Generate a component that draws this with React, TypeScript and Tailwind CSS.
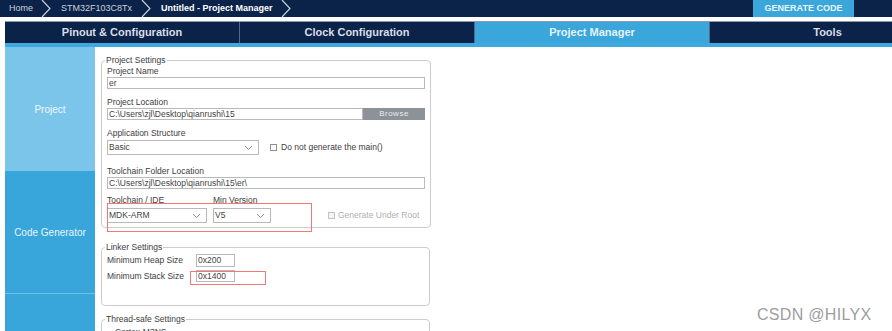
import React from "react";

const Chevron = () => (
  <svg width="10" height="17" viewBox="0 0 10 17" className="shrink-0">
    <polyline points="1,0 9,8.5 1,17" fill="none" stroke="#c7d0dc" strokeWidth="1.2" />
  </svg>
);

const DownArrow = () => (
  <svg width="9" height="6" viewBox="0 0 9 6">
    <polyline points="1,1 4.5,4.5 8,1" fill="none" stroke="#8a8a8a" strokeWidth="1" />
  </svg>
);

const RedBox = ({ w, h, className = "" }: { w: number; h: number; className?: string }) => (
  <svg width={w} height={h} viewBox={`0 0 ${w} ${h}`} className={`pointer-events-none absolute z-10 ${className}`}>
    <rect x="0.5" y="0.5" width={w - 1} height={h - 1} fill="none" stroke="#ef7878" strokeWidth="1" />
  </svg>
);

const Input = ({ value, className = "" }: { value: string; className?: string }) => (
  <div
    className={`border border-[#b9b9b9] bg-white text-[8.5px] leading-none text-[#444] flex items-center pl-[1px] ${className}`}
  >
    {value}
  </div>
);

const Select = ({ value, className = "" }: { value: string; className?: string }) => (
  <div
    className={`border border-[#b9b9b9] bg-white text-[8.5px] leading-none text-[#444] flex items-center justify-between pl-[1px] pr-[5px] ${className}`}
  >
    <span>{value}</span>
    <DownArrow />
  </div>
);

const Label = ({ children, className = "" }: { children: React.ReactNode; className?: string }) => (
  <div className={`h-[10px] leading-[10px] text-[8.5px] text-[#3d3d3d] ${className}`}>{children}</div>
);

const Box = () => <span className="inline-block w-[7px] h-[7px] border border-[#8f8f8f] bg-white" />;

export default function App() {
  return (
    <div
      className="relative w-[892px] h-[331px] overflow-hidden bg-white"
      style={{ fontFamily: "'Liberation Sans', Arial, sans-serif" }}
    >
      {/* Top breadcrumb bar */}
      <div className="h-[17px] bg-[#0b2249] flex items-center">
        <span className="ml-[9px] text-[9px] text-[#c9d1dc]">Home</span>
        <span className="ml-[8px]">
          <Chevron />
        </span>
        <span className="ml-[10px] text-[9px] text-[#c9d1dc]">STM32F103C8Tx</span>
        <span className="ml-[9px]">
          <Chevron />
        </span>
        <span className="ml-[10px] text-[9px] font-bold text-white">Untitled - Project Manager</span>
        <span className="ml-[8px]">
          <Chevron />
        </span>
        <div className="ml-auto mr-[38px] w-[101px] h-full bg-[#3aa6da] flex items-center justify-center text-[9px] font-bold text-[#eaf6fc]">
          GENERATE CODE
        </div>
      </div>

      {/* Tab bar */}
      <div className="mt-[4px] ml-[5px] h-[22px] border-t border-[#8d9bb0] bg-[#0b2249] flex overflow-hidden">
        <div className="w-[235px] shrink-0 flex items-center justify-center text-[11px] font-bold text-[#d9dee6] border-r border-[#54688a]">
          Pinout &amp; Configuration
        </div>
        <div className="w-[235px] shrink-0 flex items-center justify-center text-[11px] font-bold text-[#d9dee6] border-r border-[#54688a]">
          Clock Configuration
        </div>
        <div className="w-[235px] shrink-0 flex items-center justify-center text-[11px] font-bold text-[#e6f2fa] bg-[#3aa6da] border-r border-[#54688a]">
          Project Manager
        </div>
        <div className="w-[235px] shrink-0 flex items-center justify-center text-[11px] font-bold text-[#d9dee6]">
          Tools
        </div>
      </div>
      <div className="ml-[5px] h-[4px] bg-[#3ea9de]" />

      {/* Main */}
      <div className="ml-[5px] flex">
        {/* Sidebar */}
        <div className="w-[90px] shrink-0 flex flex-col">
          <div className="h-[124px] bg-[#7cc5ea] flex items-center justify-center text-[10px] text-[#eef8fd]">
            Project
          </div>
          <div className="h-[122px] bg-[#39a6db] flex items-center justify-center text-[10px] text-[#e6f4fb]">
            Code Generator
          </div>
          <div className="h-[60px] bg-[#39a6db] border-t border-[#72c0e8]" />
        </div>

        {/* Content */}
        <div className="pl-[6px] pt-[8px] flex flex-col">
          {/* Project Settings */}
          <fieldset className="w-[329px] border border-[#cdcdcd] rounded-[4px] px-[5px] pb-[4px]">
            <legend className="text-[8.5px] leading-[10px] text-[#3d3d3d] px-[1px] -ml-[2px]">
              Project Settings
            </legend>
            <Label className="mt-[1px]">Project Name</Label>
            <Input value="er" className="mt-[1px] h-[12px] w-[318px]" />
            <Label className="mt-[8px]">Project Location</Label>
            <div className="mt-[1px] flex w-[318px]">
              <Input value="C:\Users\zjl\Desktop\qianrushi\15" className="h-[12px] w-[256px]" />
              <div className="h-[12px] w-[62px] bg-[#8c9297] text-[8px] text-[#e9ecee] flex items-center justify-center tracking-[0.5px]">
                Browse
              </div>
            </div>
            <Label className="mt-[8px]">Application Structure</Label>
            <div className="mt-[2px] flex items-center">
              <Select value="Basic" className="h-[15px] w-[152px]" />
              <span className="ml-[11px] flex items-center">
                <Box />
              </span>
              <span className="ml-[4px] text-[8.5px] text-[#3d3d3d]">Do not generate the main()</span>
            </div>
            <Label className="mt-[11px]">Toolchain Folder Location</Label>
            <Input value="C:\Users\zjl\Desktop\qianrushi\15\er\" className="mt-[1px] h-[12px] w-[318px]" />
            <div className="relative mt-[6px]">
              <div className="flex">
                <Label className="w-[106px]">Toolchain / IDE</Label>
                <Label>Min Version</Label>
              </div>
              <div className="mt-[3px] flex items-center">
                <Select value="MDK-ARM" className="h-[15px] w-[100px]" />
                <Select value="V5" className="ml-[6px] h-[15px] w-[58px]" />
                <span className="ml-[57px] flex items-center">
                  <span className="inline-block w-[7px] h-[7px] border border-[#c4c4c4] bg-[#f4f4f4]" />
                </span>
                <span className="ml-[3px] text-[8.5px] text-[#b0b0b0]">Generate Under Root</span>
              </div>
              <RedBox w={205} h={29} className="left-0 top-[8px]" />
            </div>
          </fieldset>

          {/* Linker Settings */}
          <fieldset className="mt-[14px] w-[329px] border border-[#cdcdcd] rounded-[4px] px-[5px] pb-[23px]">
            <legend className="text-[8.5px] leading-[10px] text-[#3d3d3d] px-[1px] -ml-[2px]">
              Linker Settings
            </legend>
            <div className="mt-[2px] flex items-center h-[13px]">
              <span className="w-[89px] text-[8.5px] text-[#3d3d3d]">Minimum Heap Size</span>
              <Input value="0x200" className="h-[13px] w-[39px]" />
            </div>
            <div className="relative mt-[3px] flex items-center h-[12px]">
              <span className="w-[89px] text-[8.5px] text-[#3d3d3d]">Minimum Stack Size</span>
              <Input value="0x1400" className="h-[12px] w-[39px]" />
              <RedBox w={76} h={14} className="left-[83px] top-[1px]" />
            </div>
          </fieldset>

          {/* Thread-safe Settings */}
          <fieldset className="mt-[8px] w-[329px] border border-[#cdcdcd] rounded-[4px] px-[5px] pb-[20px]">
            <legend className="text-[8.5px] leading-[10px] text-[#3d3d3d] px-[1px] -ml-[2px]">
              Thread-safe Settings
            </legend>
            <div className="mt-[2px] ml-[8px] text-[8.5px] text-[#3d3d3d]">Cortex-M3NS</div>
          </fieldset>
        </div>
      </div>

      {/* Watermark */}
      <div className="absolute left-[757px] top-[303px] text-[16px] text-[#9d9d9d] tracking-[0.3px]">
        CSDN @HILYX
      </div>
    </div>
  );
}
